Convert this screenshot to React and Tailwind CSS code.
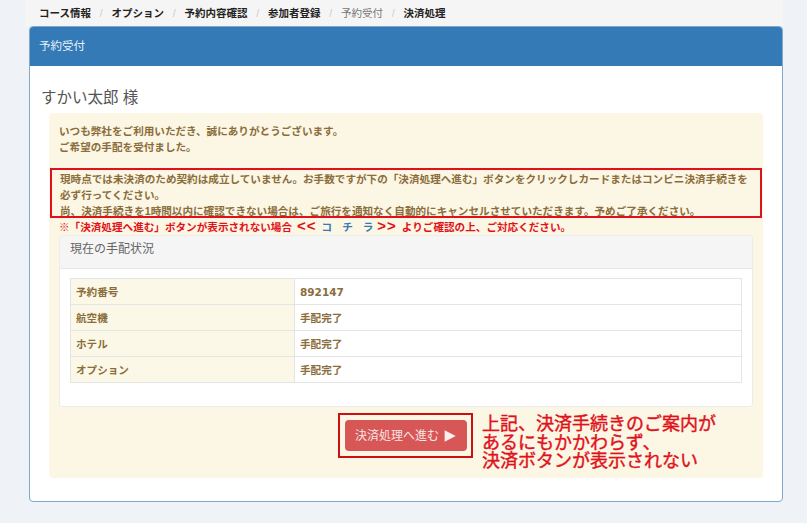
import React from "react";

function Crumb({ children, muted, last }) {
  return (
    <li className="flex items-center">
      <span className={muted ? "text-[#777] font-normal" : "text-[#222] font-bold"}>{children}</span>
      {!last && <span className="text-[#ccc] font-normal px-[8.8px]">/</span>}
    </li>
  );
}

function Row({ label, children }) {
  return (
    <tr className="h-[26px]">
      <td className="w-[224px] bg-[#fcf8e8] border border-[#e4e4e4] pl-[5px] pr-[6px] align-middle">{label}</td>
      <td className="border border-[#e4e4e4] bg-white px-[5px] align-middle">{children}</td>
    </tr>
  );
}

export default function App() {
  return (
    <div className="w-[807px] h-[523px] overflow-hidden bg-[#eff3f8] font-['Liberation_Sans','Noto_Sans_CJK_JP',sans-serif] text-[10.6px] leading-[16px]">
      <ol className="flex items-center h-[26px] ml-[25px] mr-[24px] pl-[14px] bg-[#f5f5f5] text-[10.5px]">
        <Crumb>コース情報</Crumb>
        <Crumb>オプション</Crumb>
        <Crumb>予約内容確認</Crumb>
        <Crumb>参加者登録</Crumb>
        <Crumb muted>予約受付</Crumb>
        <Crumb last>決済処理</Crumb>
      </ol>
      <section className="ml-[29px] w-[754px] h-[476px] bg-white border border-[#7fa8cc] rounded-[4px] overflow-hidden">
        <header className="h-[39px] pb-[2px] bg-[#337ab7] text-[#e8f0f8] flex items-center pl-[9px] text-[11.5px]">予約受付</header>
        <div className="pt-[22px] px-[19px]">
          <h2 className="text-[#555] text-[15.5px] leading-[20px] ml-[-8px]">すかい太郎 様</h2>
          <div className="mt-[5px] h-[365px] bg-[#fcf6e4] rounded-[4px] px-[10px] pt-[10px] text-[#8a6d3b] font-bold">
            <p>いつも弊社をご利用いただき、誠にありがとうございます。</p>
            <p>ご希望の手配を受付ました。</p>
            <div className="mt-[13px] -mx-[9px] h-[50px] border-[2px] border-[#e0111a] px-[8px] pt-[1px]">
              <p>現時点では未決済のため契約は成立していません。お手数ですが下の「決済処理へ進む」ボタンをクリックしカードまたはコンビニ決済手続きを必ず行ってください。</p>
              <p>尚、決済手続きを1時間以内に確認できない場合は、ご旅行を通知なく自動的にキャンセルさせていただきます。予めご了承ください。</p>
            </div>
            <p className="text-[#e0111a] h-[17px] leading-[17px] whitespace-nowrap">
              ※「決済処理へ進む」ボタンが表示されない場合 <span className="ml-[2px] text-[15px] leading-none tracking-[1px]">&lt;&lt;</span><span className="text-[#337ab7] tracking-[10px] pl-[5px]">コチ</span><span className="text-[#337ab7] pr-[4px]">ラ</span><span className="text-[15px] leading-none tracking-[1px]">&gt;&gt;</span><span className="pl-[5px]">よりご確認の上、ご対応ください。</span>
            </p>
            <div className="h-[172px] bg-white border border-[#ececec] rounded-[3px]">
              <div className="h-[33px] bg-[#f5f5f5] border-b border-[#e8e8e8] pl-[10px] pt-[5px] text-[12px] text-[#666] font-normal">現在の手配状況</div>
              <div className="pt-[9px] px-[10px]">
                <table className="w-[672px] border-collapse">
                  <tbody>
                    <Row label="予約番号"><span className="font-['DejaVu_Sans',sans-serif] text-[10.5px]">892147</span></Row>
                    <Row label="航空機">手配完了</Row>
                    <Row label="ホテル">手配完了</Row>
                    <Row label="オプション">手配完了</Row>
                  </tbody>
                </table>
              </div>
            </div>
            <div className="flex mt-[6px] ml-[279px] items-start">
              <div className="w-[135px] h-[45px] border-[2px] border-[#cc1111] flex items-center justify-center">
                <button className="w-[122px] h-[31px] bg-[#d75656] rounded-[4px] text-[#f6e6e4] text-[12px] font-normal flex items-center justify-center gap-[5px] shrink-0">
                  決済処理へ進む
                  <svg width="12" height="12" viewBox="0 0 10 10"><path d="M0.5 0.3L9.8 5L0.5 9.7Z" fill="#fbeeee" /></svg>
                </button>
              </div>
              <p className="ml-[9px] mt-[2px] text-[#e0111a] font-normal text-[18px] leading-[18.5px] whitespace-nowrap [-webkit-text-stroke:0.4px_#e0111a]">
                上記、決済手続きのご案内が<br />あるにもかかわらず、<br />決済ボタンが表示されない
              </p>
            </div>
          </div>
        </div>
      </section>
    </div>
  );
}
